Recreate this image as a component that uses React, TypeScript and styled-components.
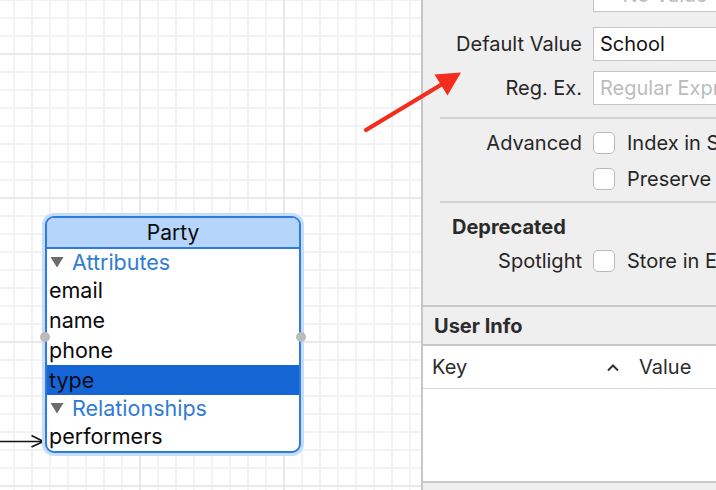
import React from "react";
import styled, { createGlobalStyle } from "styled-components";

const Global = createGlobalStyle`
  html, body { margin: 0; padding: 0; }
  body { width: 716px; height: 490px; overflow: hidden; font-family: Inter, "Noto Sans", sans-serif; }
  * { box-sizing: border-box; }
`;

const Page = styled.div`
  position: relative;
  display: flex;
  width: 716px;
  height: 490px;
  overflow: hidden;
`;

const Canvas = styled.div`
  position: relative;
  width: 421px;
  flex: none;
  height: 100%;
  background-color: #ffffff;
  background-image:
    linear-gradient(to right, #e8e8e8 2px, transparent 2px),
    linear-gradient(to bottom, #e8e8e8 2px, transparent 2px),
    linear-gradient(to right, #f3f3f3 2px, transparent 2px),
    linear-gradient(to bottom, #f3f3f3 2px, transparent 2px);
  background-size: 144px 144px, 144px 144px, 18px 18px, 18px 18px;
  background-position: 139px 0, 0 53px, 13px 0, 0 17px;
`;

const Entity = styled.div`
  position: absolute;
  left: 45px;
  top: 216px;
  width: 256px;
  border: 2px solid #2f7ae0;
  border-radius: 9px;
  background: #ffffff;
  box-shadow: 0 0 0 3px #c6ddf8;
  font-size: 21.5px;
  color: #0a0a0a;
`;

const EntityTitle = styled.div`
  height: 31px;
  display: flex;
  align-items: center;
  justify-content: center;
  background: #b5d5fb;
  border-radius: 7px 7px 0 0;
  border-bottom: 2px solid #2f7ae0;
  font-size: 21px;
`;

const EntityBody = styled.div`
  display: flex;
  flex-direction: column;
  overflow: hidden;
  border-radius: 0 0 7px 7px;
`;

const SectionRow = styled.div`
  height: 26px;
  display: flex;
  align-items: center;
  gap: 8px;
  padding-left: 3px;
  color: #2f7bd6;
`;

const Disclosure = styled.svg`
  display: block;
  flex: none;
`;

const AttrRow = styled.div<{ $selected?: boolean }>`
  height: 30px;
  display: flex;
  align-items: center;
  padding-left: 2px;
  background: ${(p) => (p.$selected ? "#1665d4" : "transparent")};
  color: ${(p) => (p.$selected ? "#0c0c18" : "#0a0a0a")};
`;

const Handle = styled.div<{ $side: "left" | "right" }>`
  position: absolute;
  top: 114px;
  ${(p) => (p.$side === "left" ? "left: -7px;" : "right: -7px;")}
  width: 10px;
  height: 10px;
  border-radius: 50%;
  background: #bcbcbc;
`;

const Overlay = styled.svg`
  position: absolute;
  left: 0;
  top: 0;
  pointer-events: none;
`;

const Panel = styled.div`
  flex: 1;
  height: 100%;
  border-left: 2px solid #c6c6c6;
  background: #efefef;
  overflow: hidden;
  display: flex;
  flex-direction: column;
  font-size: 20px;
  color: #262626;
  white-space: nowrap;
`;

const Attributes = styled.div`
  display: flex;
  flex-direction: column;
  margin-top: -22px;
`;

const FieldRow = styled.div<{ $mt?: number }>`
  display: grid;
  grid-template-columns: 159px 1fr;
  column-gap: 11px;
  align-items: center;
  margin-top: ${(p) => p.$mt ?? 0}px;
`;

const Label = styled.div`
  text-align: right;
`;

const TextField = styled.div<{ $placeholder?: boolean }>`
  height: 34px;
  width: 220px;
  background: #ffffff;
  border: 1px solid #c4c4c4;
  display: flex;
  align-items: center;
  padding-left: 6px;
  color: ${(p) => (p.$placeholder ? "#bcbcbc" : "#141414")};
`;

const Separator = styled.div<{ $mt: number }>`
  height: 2px;
  margin-left: 17px;
  margin-top: ${(p) => p.$mt}px;
  background: #d2d2d2;
`;

const CheckRow = styled.div`
  display: flex;
  align-items: center;
  gap: 12px;
`;

const CheckBox = styled.span`
  width: 22px;
  height: 22px;
  flex: none;
  border: 1px solid #b9b9b9;
  border-radius: 5px;
  background: #ffffff;
`;

const GroupTitle = styled.div`
  font-weight: 700;
  margin: 12px 0 0 29px;
  height: 24px;
  line-height: 24px;
  color: #2a2a2a;
`;

const SectionEnd = styled.div`
  height: 2px;
  background: #c8c8c8;
  margin-top: 32px;
`;

const InfoHeader = styled.div`
  height: 39px;
  display: flex;
  align-items: center;
  padding-left: 11px;
  font-weight: 700;
  color: #2c2c2c;
  border-bottom: 2px solid #c8c8c8;
`;

const Table = styled.div`
  height: 137px;
  background: #ffffff;
  border-bottom: 2px solid #c8c8c8;
`;

const TableHead = styled.div`
  height: 43px;
  display: flex;
  align-items: center;
  padding-left: 9px;
  border-bottom: 1px solid #dcdcdc;
  color: #2c2c2c;
`;

const KeyCol = styled.div`
  width: 207px;
  display: flex;
  align-items: center;
  justify-content: space-between;
  padding-right: 19px;
`;

const Sort = styled.svg`
  display: block;
`;

const Triangle = () => (
  <Disclosure width="14" height="12" viewBox="0 0 14 12">
    <polygon points="0.5,1 13.5,1 7,11.5" fill="#6b6b6b" />
  </Disclosure>
);

export default function App() {
  return (
    <Page>
      <Global />
      <Canvas>
        <Overlay width="60" height="490">
          <line x1="0" y1="441.5" x2="43" y2="441.5" stroke="#111" strokeWidth="1.6" />
          <polyline points="31.5,435.5 43.5,441.5 31.5,447" fill="none" stroke="#111" strokeWidth="1.6" />
        </Overlay>
        <Entity>
          <EntityTitle>Party</EntityTitle>
          <EntityBody>
            <SectionRow>
              <Triangle />
              Attributes
            </SectionRow>
            <AttrRow>email</AttrRow>
            <AttrRow>name</AttrRow>
            <AttrRow>phone</AttrRow>
            <AttrRow $selected>type</AttrRow>
            <SectionRow>
              <Triangle />
              Relationships
            </SectionRow>
            <AttrRow>performers</AttrRow>
          </EntityBody>
          <Handle $side="left" />
          <Handle $side="right" />
        </Entity>
      </Canvas>
      <Panel>
        <Attributes>
          <FieldRow>
            <Label />
            <TextField $placeholder>&nbsp;&nbsp;&nbsp;&nbsp;No Value</TextField>
          </FieldRow>
          <FieldRow $mt={15}>
            <Label>Default Value</Label>
            <TextField>School</TextField>
          </FieldRow>
          <FieldRow $mt={10}>
            <Label>Reg. Ex.</Label>
            <TextField $placeholder>Regular Expression</TextField>
          </FieldRow>
          <Separator $mt={12} />
          <FieldRow $mt={12}>
            <Label>Advanced</Label>
            <CheckRow>
              <CheckBox />
              Index in Spotlight
            </CheckRow>
          </FieldRow>
          <FieldRow $mt={12}>
            <Label />
            <CheckRow>
              <CheckBox />
              Preserve After Deletion
            </CheckRow>
          </FieldRow>
          <Separator $mt={10} />
          <GroupTitle>Deprecated</GroupTitle>
          <FieldRow $mt={10}>
            <Label>Spotlight</Label>
            <CheckRow>
              <CheckBox />
              Store in External Record File
            </CheckRow>
          </FieldRow>
          <SectionEnd />
        </Attributes>
        <InfoHeader>User Info</InfoHeader>
        <Table>
          <TableHead>
            <KeyCol>
              Key
              <Sort width="14" height="9" viewBox="0 0 14 9">
                <polyline points="2,7.5 7,2.5 12,7.5" fill="none" stroke="#333" strokeWidth="2" />
              </Sort>
            </KeyCol>
            Value
          </TableHead>
        </Table>
      </Panel>
      <Overlay width="716" height="490">
        <line x1="366" y1="130" x2="444" y2="83" stroke="#f42c1d" strokeWidth="4.2" strokeLinecap="round" />
        <polygon points="434.5,74.5 461,72.5 447.5,95.5" fill="#f42c1d" />
      </Overlay>
    </Page>
  );
}
